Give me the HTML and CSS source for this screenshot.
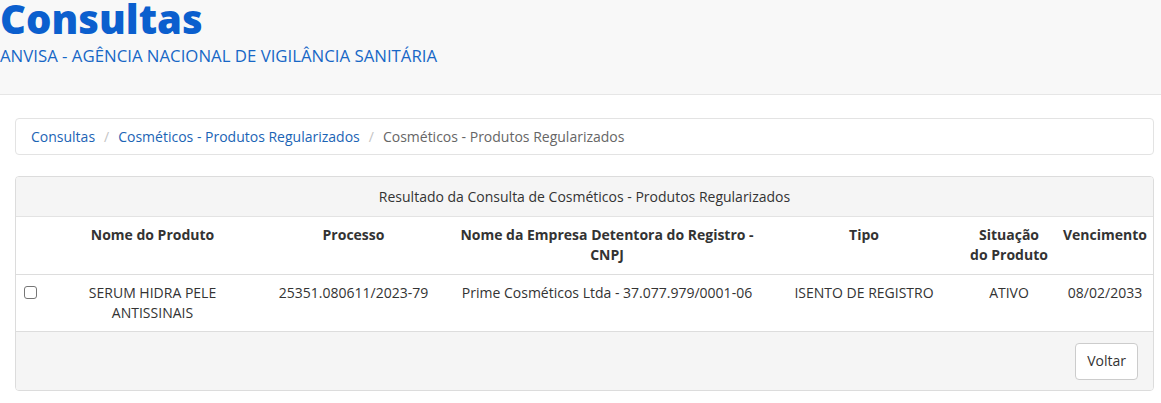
FILE: index.html
```html
<!DOCTYPE html>
<html lang="pt-BR">
<head>
<meta charset="utf-8">
<title>Consultas</title>
<link rel="stylesheet" href="styles.css">
</head>
<body>
<header class="top">
  <h1 class="title">Consultas</h1>
  <div class="subtitle">ANVISA - AGÊNCIA NACIONAL DE VIGILÂNCIA SANITÁRIA</div>
</header>
<main class="content">
  <nav class="crumbs">
    <a href="#">Consultas</a><span class="sep">/</span><a href="#">Cosméticos - Produtos Regularizados</a><span class="sep">/</span><span class="active">Cosméticos - Produtos Regularizados</span>
  </nav>
  <section class="panel">
    <div class="panel-head">Resultado da Consulta de Cosméticos - Produtos Regularizados</div>
    <table class="grid">
      <colgroup>
        <col class="c1"><col class="c2"><col class="c3"><col class="c4"><col class="c5"><col class="c6"><col class="c7">
      </colgroup>
      <thead>
        <tr>
          <th></th>
          <th>Nome do Produto</th>
          <th>Processo</th>
          <th>Nome da Empresa Detentora do Registro - CNPJ</th>
          <th>Tipo</th>
          <th>Situação do Produto</th>
          <th class="last">Vencimento</th>
        </tr>
      </thead>
      <tbody>
        <tr>
          <td class="chk"><span class="box"></span></td>
          <td>SERUM HIDRA PELE ANTISSINAIS</td>
          <td>25351.080611/2023-79</td>
          <td>Prime Cosméticos Ltda - 37.077.979/0001-06</td>
          <td>ISENTO DE REGISTRO</td>
          <td>ATIVO</td>
          <td class="last">08/02/2033</td>
        </tr>
      </tbody>
    </table>
    <div class="panel-foot"><button class="btn">Voltar</button></div>
  </section>
</main>
</body>
</html>
```
FILE: styles.css
```css
* { box-sizing: border-box; }
html, body { margin: 0; padding: 0; background: #fff; }
body { font-family: "Open Sans", "Noto Sans", sans-serif; font-size: 14px; line-height: 20px; color: #333; }

.top { display: flow-root; background: #f8f8f8; border-bottom: 1px solid #e6e6e6; height: 95px; }
.title { margin: -1px 0 0; font-size: 40px; line-height: 40px; font-weight: 800; color: #0b5fce; }
.subtitle { color: #1767c6; font-size: 16.8px; line-height: 22px; margin-top: 6px; }

.content { padding: 23px 7px 0 15px; }
.crumbs { border: 1px solid #e3e3e3; border-radius: 4px; padding: 8px 15px; line-height: 19px; background: #fff; }
.crumbs a { color: #1b64b5; text-decoration: none; }
.crumbs .sep { color: #c4c4c4; padding: 0 9px; }
.crumbs .active { color: #666; }

.panel { margin-top: 21px; border: 1px solid #dcdcdc; border-radius: 4px; overflow: hidden; }
.panel-head { background: #f5f5f5; text-align: center; padding: 10px 15px 10px; line-height: 19px; border-bottom: 1px solid #e3e3e3; }
.grid { width: 100%; border-collapse: collapse; table-layout: fixed; }
.c1 { width: 29px; } .c2 { width: 215px; } .c3 { width: 187px; } .c4 { width: 320px; } .c5 { width: 194px; } .c6 { width: 96px; } .c7 { width: 96px; }
.grid th { font-weight: 700; text-align: center; vertical-align: top; padding: 8px 8px; height: 57px; border-bottom: 1px solid #ddd; color: #333; }
.grid td { text-align: center; vertical-align: top; padding: 8px 8px; height: 57px; border-bottom: 1px solid #ddd; background: #fff; }
.grid th.last, .grid td.last { padding-left: 6px; padding-right: 6px; }
.grid td.chk { text-align: left; padding: 11px 0 0 8px; }
.box { display: block; width: 13px; height: 13px; border: 1px solid #767676; border-radius: 3px; background: #fff; }
.panel-foot { background: #f5f5f5; padding: 11px 15px 10px; display: flex; justify-content: flex-end; }
.btn { font-family: inherit; font-size: 14px; line-height: 22px; color: #333; background: #fff; border: 1px solid #ccc; border-radius: 4px; padding: 6px 11px; height: 37px; }
```
